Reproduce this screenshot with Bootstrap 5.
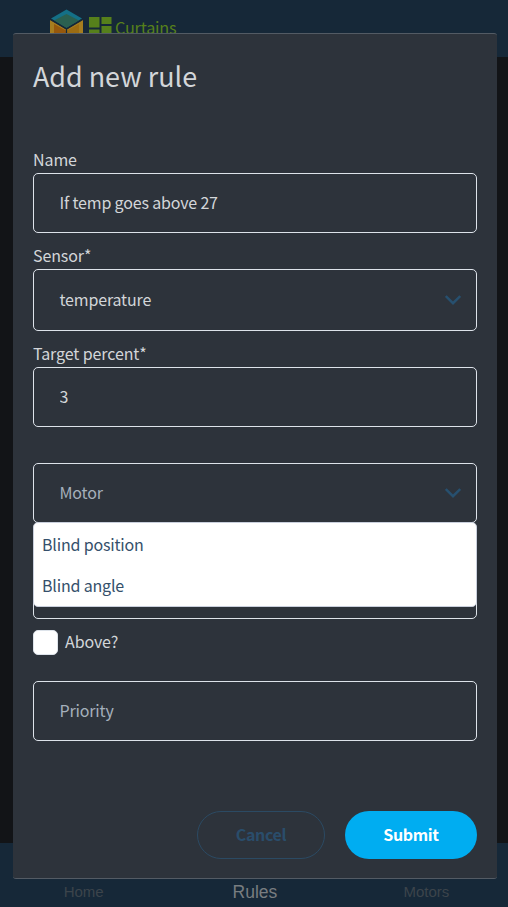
<!DOCTYPE html>
<html lang="en">
<head>
<meta charset="utf-8">
<meta name="viewport" content="width=device-width, initial-scale=1">
<title>Curtains</title>
<link href="https://cdn.jsdelivr.net/npm/bootstrap@5.3.0/dist/css/bootstrap.min.css" rel="stylesheet">
<style>
body{background:#121417;font-family:"Noto Sans CJK SC","Noto Sans",sans-serif;height:907px;overflow:hidden;color:#d3d6d9}
.topbar{height:57px;background:#162838;padding-left:50px}
.brand-name{font-size:16.3px;line-height:24px;letter-spacing:-.25px;color:#56801b;margin:15px 0 0 3px}
.brand-mark{margin-top:9px}
.brand-grid{margin:16px 0 0 6px}
.tabs{height:64px;background:#162838;font-family:"Liberation Sans",Arial,sans-serif;font-size:15px;color:#3c444b;padding:34px 0 0 0}
.tabs .tab{width:171.5px;line-height:30px}
.tabs .tab:first-child{padding-right:2px}
.tabs .tab:last-child{padding-left:6px}
.tabs .on{font-size:17.5px;color:#787d80;padding-left:2px}
.rule-modal{overflow:hidden}
.rule-modal .modal-dialog{margin:33px 11px 0 13px;max-width:none}
.rule-modal .modal-content{height:846px;background:#2d333b;border:0;border-top:1px solid #535b64;border-bottom:1px solid #535b64;border-radius:3px;padding:0 20px;color:#d3d6d9}
.rule-title{font-size:26.9px;line-height:40px;font-weight:400;margin:22px 0 51px}
.field-label{height:26px;line-height:24px;font-size:16px;letter-spacing:-.1px}
.field{margin-bottom:10px;font-size:16px}
.field-box{height:60px;border:1px solid #dde3ea;border-radius:5px;background:transparent;color:#d3d6d9;font-size:16px;letter-spacing:-.17px;line-height:24px;padding:0 25.5px 2px;width:100%}
.field-box.tall{height:62px}
.field-box::placeholder,.field-box.hint{color:#a5b0bb}
.field-box svg{margin-right:-1px}
.choices{top:85px;left:0;right:0;height:85px;z-index:3;background:#fff;border:1px solid #c9cfdc;border-radius:5px;color:#35506b;font-size:16px;letter-spacing:-.18px;padding:1px 8px}
.choices div{height:41px;line-height:41px}
.above{margin-top:11px;margin-bottom:26px;height:25px;font-size:16px;gap:7px;letter-spacing:-.1px}
.above span{padding-bottom:3px}
.above .form-check-input{width:25px;height:25px;border:1px solid #dde3ea;border-radius:5px;background-color:#fff}
.actions{margin-top:70px;gap:20px}
.actions .btn{height:48px;border-radius:24px;font-size:16px;font-weight:700;line-height:24px;letter-spacing:-.35px;padding:4px 0 6px}
.actions .btn-quit{width:128px;border:1px solid #2b4a63;color:#2a4d6b}
.actions .btn-send{width:132px;background:#00adf1;color:#fff;border:0}
</style>
</head>
<body class="d-flex flex-column justify-content-between">
<header class="topbar d-flex align-items-start">
  <svg class="brand-mark" width="33" height="36" viewBox="0 0 33 36">
    <path d="M16.500.5 32 9.500 16.500 19 1 9.500Z" fill="#147087"/>
    <path d="M16.500 5 29 11.500 16.500 19 4 11.500Z" fill="#2a6050"/>
    <path d="M0 11 16 20.500V36L0 30Z" fill="#a67d1f"/><path d="M33 11 17 20.500V36L33 30Z" fill="#a67d1f"/>
    <path d="M4 15 16 21.500V36L4 29Z" fill="#96580c"/><path d="M29 15 17 21.500V36L29 29Z" fill="#9c6c12"/>
    <path d="M0 10 16.500 19.800 33 10M16.500 20V36" fill="none" stroke="#162838" stroke-width="1.200"/>
  </svg>
  <svg class="brand-grid" width="23" height="22" viewBox="0 0 23 22" fill="#56801b">
    <path d="M0 1h10.500v10.500H0zM0 13.500h10.500V22H0zM12.500 1h10v7h-10zM12.500 10h10v12h-10z"/>
  </svg>
  <span class="brand-name">Curtains</span>
</header>
<nav class="tabs d-flex justify-content-center text-center">
  <span class="tab">Home</span><span class="tab on">Rules</span><span class="tab">Motors</span>
</nav>
<div class="modal d-block rule-modal" tabindex="-1">
  <div class="modal-dialog">
    <form class="modal-content">
      <h1 class="rule-title">Add new rule</h1>
      <div class="field"><label class="field-label d-block" for="name">Name</label>
        <input class="field-box d-block" id="name" value="If temp goes above 27"></div>
      <div class="field"><div class="field-label">Sensor*</div>
        <div class="field-box tall d-flex align-items-center justify-content-between pe-3"><span>temperature</span>
          <svg width="16" height="11" viewBox="0 0 16 11" fill="none" stroke="#27506f" stroke-width="2.4"><path d="m.8 2 7.200 7.200 7.200-7.200"/></svg></div></div>
      <div class="field"><label class="field-label d-block" for="pct">Target percent*</label>
        <input class="field-box d-block" id="pct" value="3"></div>
      <div class="field position-relative"><div class="field-label"></div>
        <div class="field-box hint d-flex align-items-center justify-content-between pe-3"><span>Motor</span>
          <svg width="16" height="11" viewBox="0 0 16 11" fill="none" stroke="#27506f" stroke-width="2.4"><path d="m.8 2 7.200 7.200 7.200-7.200"/></svg></div>
        <div class="choices position-absolute"><div>Blind position</div><div>Blind angle</div></div></div>
      <div class="field mb-0"><div class="field-label"></div><input class="field-box d-block" aria-label="Value"></div>
      <label class="above d-flex align-items-center"><input class="form-check-input m-0" type="checkbox"><span>Above?</span></label>
      <input class="field-box d-block" placeholder="Priority" aria-label="Priority">
      <div class="actions d-flex justify-content-end">
        <button type="button" class="btn btn-quit">Cancel</button>
        <button type="button" class="btn btn-send">Submit</button>
      </div>
    </form>
  </div>
</div>
<script src="https://cdn.jsdelivr.net/npm/bootstrap@5.3.0/dist/js/bootstrap.bundle.min.js"></script>
</body>
</html>
